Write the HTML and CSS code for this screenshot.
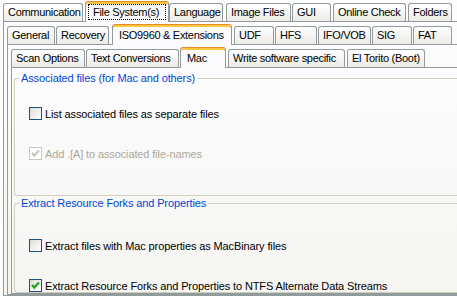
FILE: index.html
```html
<!DOCTYPE html>
<html>
<head>
<meta charset="utf-8">
<link rel="stylesheet" href="styles.css">
</head>
<body>
<div class="tabctl l1">
  <div class="strip">
    <div class="tab t-comm">Communication</div>
    <div class="tab sel t-fs"><span class="focus">File System(s)</span></div>
    <div class="tab t-lang">Language</div>
    <div class="tab t-img">Image Files</div>
    <div class="tab t-gui">GUI</div>
    <div class="tab t-online">Online Check</div>
    <div class="tab t-folders">Folders</div>
  </div>
  <div class="panel">
    <div class="tabctl l2">
      <div class="strip">
        <div class="tab t-general">General</div>
        <div class="tab t-recovery">Recovery</div>
        <div class="tab sel t-iso">ISO9960 &amp; Extensions</div>
        <div class="tab t-udf">UDF</div>
        <div class="tab t-hfs">HFS</div>
        <div class="tab t-ifo">IFO/VOB</div>
        <div class="tab t-sig">SIG</div>
        <div class="tab t-fat">FAT</div>
      </div>
      <div class="panel">
        <div class="tabctl l3">
          <div class="strip">
            <div class="tab t-scan">Scan Options</div>
            <div class="tab t-text">Text Conversions</div>
            <div class="tab sel t-mac">Mac</div>
            <div class="tab t-write">Write software specific</div>
            <div class="tab t-boot">El Torito (Boot)</div>
          </div>
          <div class="panel content">
            <fieldset class="group g1">
              <legend>Associated files (for Mac and others)</legend>
              <div class="check">
                <span class="cb"></span>
                <span class="lbl">List associated files as separate files</span>
              </div>
              <div class="check disabled">
                <span class="cb"><svg viewBox="0 0 11 11" width="11" height="11"><polyline points="2,5 4.3,7.6 9,2.6" fill="none" stroke="#cac8bb" stroke-width="2.2"/></svg></span>
                <span class="lbl">Add .[A] to associated file-names</span>
              </div>
            </fieldset>
            <fieldset class="group g2">
              <legend>Extract Resource Forks and Properties</legend>
              <div class="check">
                <span class="cb"></span>
                <span class="lbl">Extract files with Mac properties as MacBinary files</span>
              </div>
              <div class="check">
                <span class="cb"><svg viewBox="0 0 11 11" width="11" height="11"><polyline points="2,5 4.3,7.6 9,2.6" fill="none" stroke="#21a121" stroke-width="2.2"/></svg></span>
                <span class="lbl">Extract Resource Forks and Properties to NTFS Alternate Data Streams</span>
              </div>
            </fieldset>
          </div>
        </div>
      </div>
    </div>
  </div>
</div>
</body>
</html>
```

FILE: styles.css
```css
html, body {
  margin: 0;
  padding: 0;
  width: 457px;
  height: 296px;
  overflow: hidden;
  background: #fcfcfc;
  font-family: "Liberation Sans", Arial, sans-serif;
  font-size: 11px;
  letter-spacing: -0.12px;
  color: #000;
}

.tabctl {
  display: flex;
  flex-direction: column;
}

.l1 {
  margin-left: 3px;
  padding-top: 1px;
  width: 500px;
}

.strip {
  display: flex;
  align-items: flex-end;
  height: 20px;
}

.tab {
  flex: none;
  height: 18px;
  box-sizing: border-box;
  padding: 0 0 0 4px;
  text-align: left;
  line-height: 17px;
  letter-spacing: -0.3px;
  border: 1px solid #919b9c;
  border-bottom: none;
  border-radius: 3px 3px 0 0;
  background: linear-gradient(#ffffff, #ecebe6);
  white-space: nowrap;
}

.tab.sel {
  position: relative;
  z-index: 2;
  height: 21px;
  margin-bottom: -1px;
  padding: 2px 0 1px 6px;
  border-top-color: #e68b2c;
  box-shadow: inset 0 2px 0 #ffc83c;
  background: #fcfcfe;
}

/* row 1 tab geometry */
.t-comm { width: 80px; margin-right: 2px; }
.t-fs { width: 84px; margin-right: 0; }
.t-lang { width: 54px; margin-right: 3px; }
.t-img { width: 65px; margin-right: 1px; }
.t-gui { width: 39px; margin-right: 2px; }
.t-online { width: 73px; margin-right: 2px; }
.t-folders { width: 44px; }

/* row 2 tab geometry */
.t-general { width: 48px; margin-right: 1px; }
.t-recovery { width: 53px; margin-right: 3px; }
.t-iso { width: 120px; margin-right: 2px; }
.t-udf { width: 40px; margin-right: 1px; }
.t-hfs { width: 42px; margin-right: 1px; }
.t-ifo { width: 53px; margin-right: 1px; }
.t-sig { width: 40px; margin-right: 1px; }
.t-fat { width: 39px; }

/* row 3 tab geometry */
.t-scan { width: 74px; margin-right: 1px; }
.t-text { width: 93px; margin-right: 1px; }
.t-mac { width: 46px; margin-right: 2px; }
.t-write { width: 117px; margin-right: 2px; }
.t-boot { width: 78px; }

.t-fs.sel {
  padding-left: 2px;
}

.focus {
  display: inline-block;
  line-height: 14px;
  width: 78px;
  padding-left: 4px;
  box-sizing: border-box;
  border: 1px dotted #000;
}

.panel {
  border: 1px solid #919b9c;
  border-right: none;
  background: linear-gradient(#fcfcfe, #f4f3ee 300px);
  padding: 2px 0 0 3px;
  flex: 1;
}

.l1 > .panel {
  height: 300px;
}

.l2, .l3 {
  height: 100%;
}

.content {
  padding: 4px 0 0 2px;
}

.group {
  margin: 0;
  padding: 0 0 0 14px;
  border: 1px solid #d0d0bf;
  border-right: none;
  border-radius: 3px 0 0 3px;
  min-width: 0;
}

.group legend {
  color: #0046d5;
  padding: 0 2px;
  margin-left: -10px;
  line-height: 13px;
}

.g1 {
  height: 124px;
  box-sizing: border-box;
}

.g2 {
  margin-top: 1px;
}

.check {
  display: flex;
  align-items: center;
  height: 13px;
  margin-top: 22px;
}

.g1 .check + .check,
.g2 .check + .check {
  margin-top: 27px;
}

.g2 .check:first-of-type {
  margin-top: 29px;
}

.cb {
  display: block;
  width: 13px;
  height: 13px;
  box-sizing: border-box;
  border: 1px solid #1c5180;
  background: linear-gradient(135deg, #dcdcd7, #ffffff);
  margin-right: 3px;
}

.cb svg {
  display: block;
}

.lbl {
  white-space: nowrap;
}

.disabled .cb {
  border-color: #cac8bb;
  background: #ffffff;
}

.disabled .lbl {
  color: #aca899;
}
```
